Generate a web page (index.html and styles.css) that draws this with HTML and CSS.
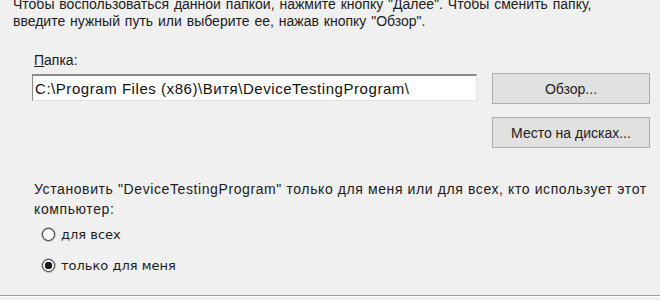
FILE: index.html
```html
<!DOCTYPE html>
<html lang="ru">
<head>
  <meta charset="UTF-8">
  <meta name="viewport" content="width=device-width, initial-scale=1.0">
  <title>Выбор папки установки</title>
  <link rel="stylesheet" href="styles.css">
</head>
<body>
  <div class="page">
    <p class="intro">Чтобы воспользоваться данной папкой, нажмите кнопку "Далее". Чтобы сменить папку, введите нужный путь или выберите ее, нажав кнопку "Обзор".</p>

    <div class="folder">
      <div class="folder-field">
        <label class="folder-label" for="path"><u>П</u>апка:</label>
        <div class="path-box" id="path">C:\Program Files (x86)\Витя\DeviceTestingProgram\</div>
      </div>
      <div class="folder-buttons">
        <button class="btn">Обзор...</button>
        <button class="btn">Место на дисках...</button>
      </div>
    </div>

    <p class="scope">Установить "DeviceTestingProgram" только для меня или для всех, кто использует этот компьютер:</p>

    <div class="radios">
      <label class="radio"><span class="radio-dot"></span>для всех</label>
      <label class="radio"><span class="radio-dot checked"></span>только для меня</label>
    </div>

    <div class="divider"></div>
  </div>
</body>
</html>
```

FILE: styles.css
```css
html, body {
  margin: 0;
  height: 100%;
  overflow: hidden;
}

body {
  background-color: #f0f0f0;
  color: #1b1b1b;
  font-family: "Liberation Sans", Arial, sans-serif;
  font-size: 14px;
}

.page {
  display: flex;
  flex-direction: column;
  height: 300px;
}

/* first line is partly scrolled out of view, as in the wizard */
.intro {
  margin: -4px 0 0 13px;
  width: 630px;
  line-height: 17px;
  word-spacing: 1px;
}

.folder {
  display: flex;
  gap: 15px;
  margin: 22px 0 0 32px;
}

.folder-field {
  display: flex;
  flex-direction: column;
}

.folder-label {
  padding-left: 2px;
  line-height: 17px;
  margin-bottom: 5px;
}

.path-box {
  box-sizing: border-box;
  width: 445px;
  height: 27px;
  padding: 4px 2px;
  background-color: #fff;
  border: 1px solid #e3e3e3;
  border-top: 2px solid #8a8a8a;
  border-left: 1px solid #8a8a8a;
  font-size: 15px;
  line-height: 18px;
  letter-spacing: 0.55px;
  color: #111;
}

.folder-buttons {
  display: flex;
  flex-direction: column;
  gap: 13px;
  padding-top: 21px;
}

.btn {
  box-sizing: border-box;
  width: 158px;
  height: 31px;
  background-color: #e1e1e1;
  border: 1px solid #adadad;
  font-family: "Liberation Sans", Arial, sans-serif;
  font-size: 14px;
  color: #222;
  padding: 0;
}

.scope {
  margin: 31px 0 0 34px;
  width: 622px;
  line-height: 20px;
  letter-spacing: 0.6px;
}

.radios {
  display: flex;
  flex-direction: column;
  gap: 12px;
  margin: 6px 0 0 42px;
}

.radio {
  display: flex;
  align-items: center;
  gap: 6px;
  font-family: "DejaVu Sans", sans-serif;
  font-size: 13px;
  line-height: 19px;
}

.radio-dot {
  box-sizing: border-box;
  width: 13px;
  height: 13px;
  border: 1px solid #333;
  border-radius: 50%;
  background-color: #fff;
  box-shadow: 0 0 0 1px #bbb;
}

.radio-dot.checked {
  background: radial-gradient(circle, #1a1a1a 0 3.5px, #fff 4px);
}

.divider {
  margin-top: auto;
  margin-bottom: 3px;
  border-top: 1px solid #a0a0a0;
  border-bottom: 1px solid #fdfdfd;
}
```
